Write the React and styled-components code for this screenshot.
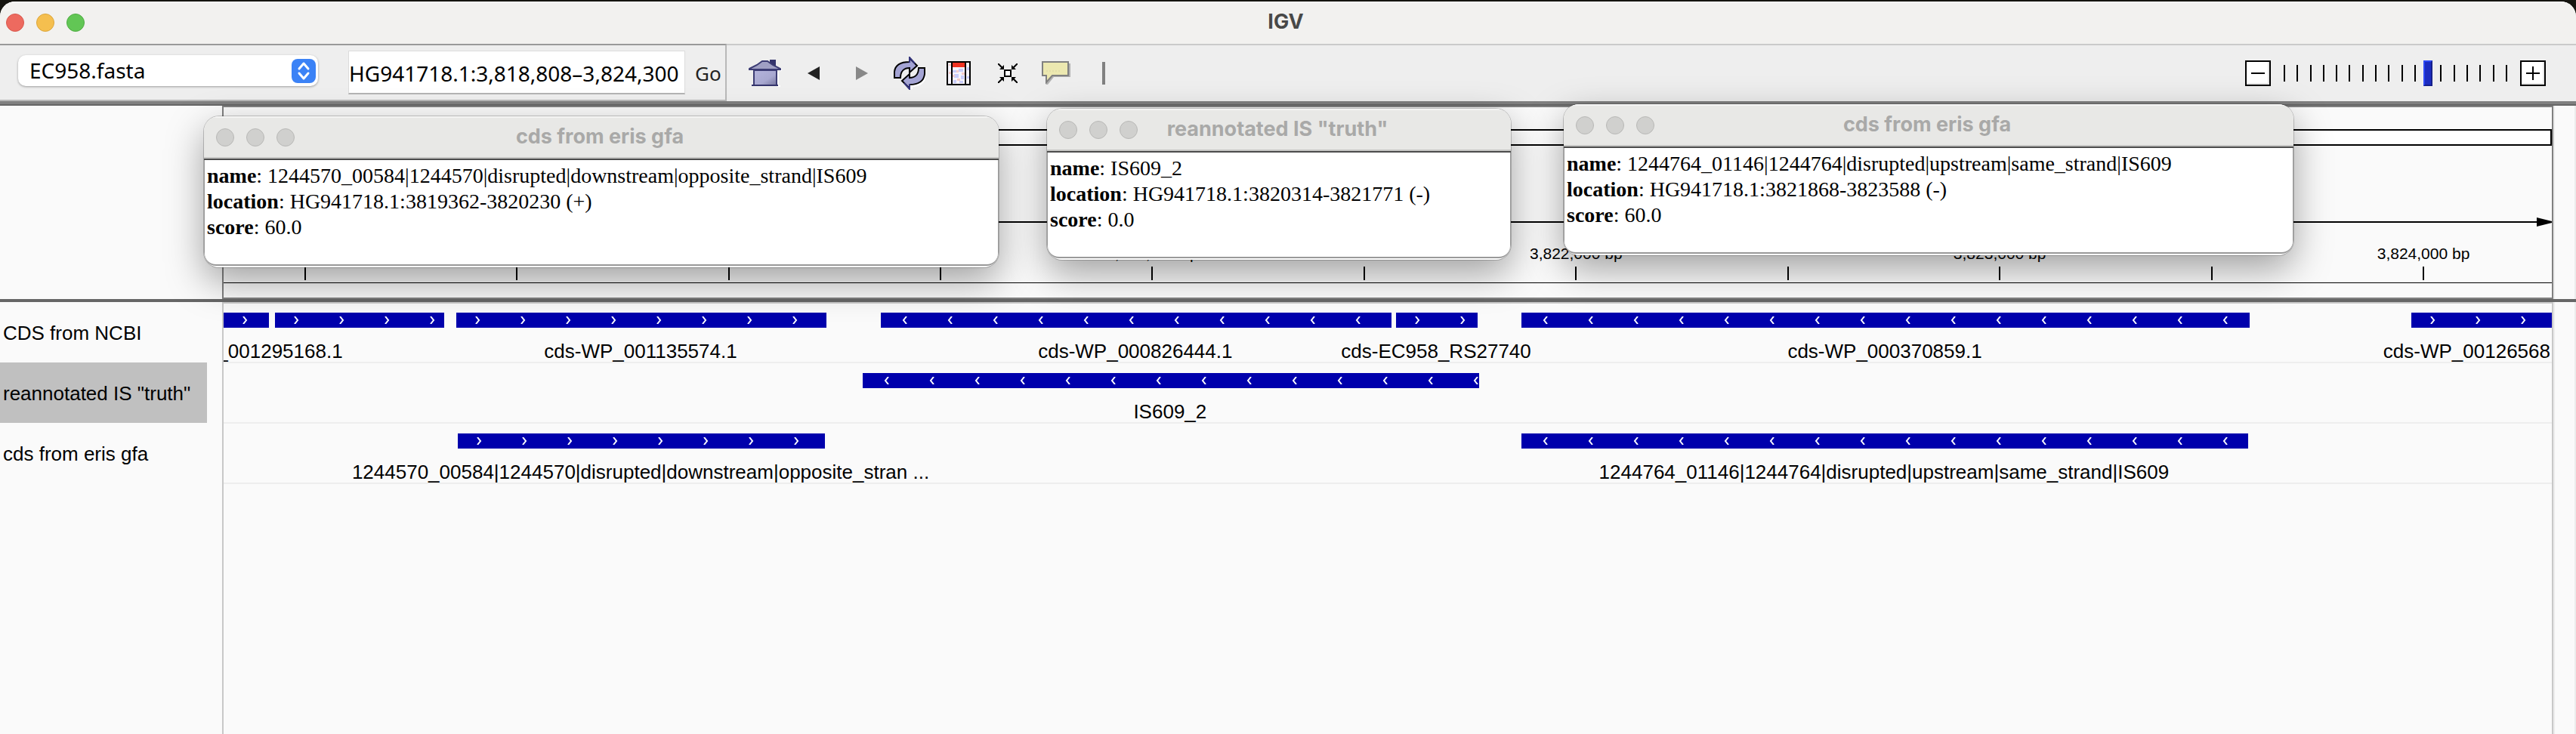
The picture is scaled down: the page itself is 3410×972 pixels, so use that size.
import React from "react";
import styled, { createGlobalStyle } from "styled-components";

const sans = '"Liberation Sans", Arial, sans-serif';
const humanist = '"Noto Sans", "Open Sans", sans-serif';
const heading = 'Inter, "Liberation Sans", sans-serif';
const serif = '"Liberation Serif", "Times New Roman", serif';

const GlobalStyle = createGlobalStyle`
  *, *::before, *::after { box-sizing: border-box; }
  body { margin: 0; background: #15140f; }
`;

const Desktop = styled.div`
  min-height: 100vh;
  padding-top: 2px;
  display: flex;
  flex-direction: column;
  background: #15140f;
  font-family: ${sans};
  color: #000;
`;

const AppWindow = styled.div`
  position: relative;
  flex: 1;
  display: flex;
  flex-direction: column;
  border-radius: 20px 20px 0 0;
  background: #fafafa;
  overflow: hidden;
`;

const TitleBar = styled.header`
  position: relative;
  display: flex;
  align-items: center;
  height: 56px;
  padding-left: 8px;
  background: #f2f1ef;
  box-shadow: inset 0 2px 0 #fbfbfa;
`;

const Lights = styled.div`
  display: flex;
  gap: 16px;
`;

const Light = styled.button`
  width: 24px;
  height: 24px;
  padding: 0;
  border: 1px solid ${(p) => p.$edge};
  border-radius: 50%;
  background: ${(p) => p.$fill};
`;

const Title = styled.h1`
  position: absolute;
  inset: 0;
  margin: 0;
  padding-right: 6px;
  font: 700 27px/54px ${heading};
  text-align: center;
  color: #484847;
  pointer-events: none;
`;

const Toolbar = styled.div`
  display: flex;
  height: 76px;
  background: #eeeeee;
`;

const LocusGroup = styled.form`
  display: flex;
  align-items: center;
  width: 962px;
  padding-left: 24px;
  border: solid #b8b8b8;
  border-width: 2px 2px 2px 0;
  border-top-color: #999999;
`;

const SelectBox = styled.div`
  position: relative;
  width: 397px;
  height: 41px;
  margin: 0 40px 6px 0;
`;

const GenomeSelect = styled.select`
  appearance: none;
  width: 100%;
  height: 100%;
  padding: 0 40px 0 15px;
  border: 0;
  border-radius: 10px;
  background: #fff;
  box-shadow: 0 1px 3px rgba(0, 0, 0, 0.35);
  font: 28px/40px ${humanist};
  color: #000;
`;

const SelectArrows = styled.svg`
  position: absolute;
  top: 5px;
  right: 3px;
  pointer-events: none;
`;

const LocusInput = styled.input`
  width: 446px;
  height: 58px;
  padding: 2px 0 0;
  border: 1px solid #dcdcdc;
  border-bottom: 2px solid #b4b4b4;
  background: #fff;
  font: 28px/50px ${humanist};
  color: #000;
`;

const GoButton = styled.button`
  margin-left: 13px;
  padding: 2px 0 0;
  border: 0;
  background: none;
  font: 26px/50px ${humanist};
  color: #222;
`;

const Tools = styled.div`
  flex: 1;
  display: flex;
  align-items: center;
  padding: 0 40px 0 29px;
  border-top: 2px solid #cacaca;
`;

const ToolButton = styled.button`
  display: flex;
  padding: 0;
  margin-right: ${(p) => p.$gap}px;
  border: 0;
  background: none;
`;

const Separator = styled.div`
  width: 4px;
  height: 30px;
  background: #808080;
`;

const Zoom = styled.div`
  display: flex;
  align-items: center;
  margin-left: auto;
`;

const ZoomButton = styled.button`
  display: flex;
  align-items: center;
  justify-content: center;
  width: 34px;
  height: 34px;
  padding: 0;
  border: 2px solid #000;
  background: #fff;
  box-shadow: inset -2px -2px 0 #e6e6e6;
`;

const ZoomScale = styled.div`
  position: relative;
  display: flex;
  justify-content: space-between;
  align-items: center;
  width: 296px;
  height: 34px;
  margin: 0 17px;
`;

const ScaleMark = styled.span`
  width: 2px;
  height: 22px;
  background: #000;
`;

const ZoomRange = styled.input`
  position: absolute;
  top: 0;
  left: -5px;
  appearance: none;
  width: calc(100% + 10px);
  height: 34px;
  margin: 0;
  background: transparent;
  &::-webkit-slider-thumb {
    appearance: none;
    width: 12px;
    height: 34px;
    border: 2px solid #16208c;
    border-top-color: #2c48f5;
    border-left-color: #2c48f5;
    background: #1c2cc0;
  }
`;

const Splitter = styled.div`
  height: ${(p) => (p.$main ? 6 : 4)}px;
  background: #666;
  border-top: ${(p) => (p.$main ? "4px solid #808080" : "0")};
`;

const PanelRow = styled.section`
  display: grid;
  grid-template-columns: 294px 1fr 30px;
  ${(p) => p.$fill && "flex: 1;"}
`;

const NameColumn = styled.div`
  background: #fafafa;
`;

const ScrollColumn = styled.div`
  background: #fafafa;
  border: solid #ececec;
  border-width: 0 2px;
`;

const Ruler = styled.div`
  position: relative;
  display: flex;
  flex-direction: column;
  height: 256px;
  padding-top: 29px;
  border: 2px solid #808080;
  background: #fafafa;
  overflow: hidden;
`;

const Ideogram = styled.div`
  height: 22px;
  border: 2px solid #000;
  background: #fff;
`;

const SpanArrow = styled.div`
  display: flex;
  align-items: center;
  height: 12px;
  margin: 95px 0 53px;
`;

const SpanLine = styled.div`
  flex: 1;
  height: 2px;
  background: #000;
`;

const RulerScale = styled.div`
  position: relative;
  height: 22px;
  border-bottom: 1px solid #000;
`;

const Tick = styled.div`
  position: absolute;
  top: 0;
  width: 2px;
  height: 18px;
  margin-left: -1px;
  background: #000;
`;

const TickLabel = styled.span`
  position: absolute;
  bottom: 22px;
  left: 1px;
  transform: translateX(-50%);
  font-size: 21px;
  line-height: 26px;
  white-space: nowrap;
`;

const TrackName = styled.div`
  width: 274px;
  height: 80px;
  padding-left: 4px;
  font-size: 26px;
  line-height: 82px;
  white-space: nowrap;
  background: ${(p) => (p.$selected ? "#c0c0c0" : "transparent")};
`;

const DataPanel = styled.div`
  border: solid #c8c8c8;
  border-width: 2px 2px 0;
  background: #fafafa;
  overflow: hidden;
`;

const TrackRow = styled.div`
  position: relative;
  height: 80px;
  border-bottom: 2px solid #eeeeee;
  &:first-child { margin-top: -1px; }
`;

const Feature = styled.div`
  position: absolute;
  top: 13px;
  display: flex;
  flex-direction: column;
  align-items: ${(p) => (p.$labelEnd ? "flex-end" : "center")};
`;

const FeatureBar = styled.div`
  display: flex;
  align-items: center;
  width: 100%;
  height: 20px;
  background: #0000ac;
`;

const FeatureLabel = styled.span`
  margin: 17px 2px 0 0;
  font-size: 26px;
  line-height: 28px;
  white-space: nowrap;
`;

const Dialog = styled.section`
  position: absolute;
  display: flex;
  flex-direction: column;
  height: 200px;
  border-radius: 20px;
  background: #fff;
  box-shadow: 0 0 0 1px rgba(0, 0, 0, 0.2), 0 18px 50px rgba(0, 0, 0, 0.36);
  overflow: hidden;
`;

const DialogBar = styled.div`
  position: relative;
  display: flex;
  align-items: center;
  height: 58px;
  padding-left: 16px;
  background: #e8e8e6;
  border-bottom: 2px solid #4c4c4c;
  box-shadow: inset 0 -2px 0 #c6c6c4, inset 0 2px 0 #f4f4f3;
`;

const DialogTitle = styled.h2`
  position: absolute;
  inset: 0;
  margin: 0;
  padding-right: 4px;
  font: 700 27px/54px ${heading};
  text-align: center;
  color: #a9a9a8;
  pointer-events: none;
`;

const DialogBody = styled.dl`
  flex: 1;
  margin: 0 0 2px;
  padding: 4px 0 0 3px;
  border: solid #999;
  border-width: 0 1px 2px;
  border-radius: 0 0 16px 16px;
  font: 28px/34px ${serif};
`;

const Field = styled.div`
  display: flex;
  white-space: pre;
`;

const FieldName = styled.dt`
  font-weight: 700;
`;

const FieldValue = styled.dd`
  margin: 0;
`;

/* The visible window of the chromosome; everything on the tracks is placed by base pair. */
const VIEW = { start: 3818808, end: 3824303 };
const toPercent = (bp) => ((bp - VIEW.start) / (VIEW.end - VIEW.start)) * 100;

const TICKS = Array.from({ length: 11 }, (_, i) => 3819000 + i * 500);

const TRACKS = [
  {
    name: "CDS from NCBI",
    features: [
      { start: 3818808, end: 3818915, strand: "+", label: "cds-WP_001295168.1" },
      { start: 3818929, end: 3819329, strand: "+" },
      { start: 3819357, end: 3820231, strand: "+", label: "cds-WP_001135574.1" },
      { start: 3820359, end: 3821564, strand: "-", label: "cds-WP_000826444.1" },
      { start: 3821575, end: 3821768, strand: "+", label: "cds-EC958_RS27740" },
      { start: 3821871, end: 3823590, strand: "-", label: "cds-WP_000370859.1" },
      { start: 3823971, end: 3824303, strand: "+", label: "cds-WP_00126568", labelEnd: true },
    ],
  },
  {
    name: 'reannotated IS "truth"',
    selected: true,
    features: [{ start: 3820316, end: 3821771, strand: "-", label: "IS609_2" }],
  },
  {
    name: "cds from eris gfa",
    features: [
      {
        start: 3819361,
        end: 3820227,
        strand: "+",
        label: "1244570_00584|1244570|disrupted|downstream|opposite_stran ...",
      },
      {
        start: 3821871,
        end: 3823586,
        strand: "-",
        label: "1244764_01146|1244764|disrupted|upstream|same_strand|IS609",
      },
    ],
  },
];

const DIALOGS = [
  {
    title: "cds from eris gfa",
    box: { left: 270, top: 152, width: 1052 },
    fields: [
      ["name", "1244570_00584|1244570|disrupted|downstream|opposite_strand|IS609"],
      ["location", "HG941718.1:3819362-3820230 (+)"],
      ["score", "60.0"],
    ],
  },
  {
    title: 'reannotated IS "truth"',
    box: { left: 1386, top: 142, width: 614 },
    fields: [
      ["name", "IS609_2"],
      ["location", "HG941718.1:3820314-3821771 (-)"],
      ["score", "0.0"],
    ],
  },
  {
    title: "cds from eris gfa",
    box: { left: 2070, top: 136, width: 966 },
    fields: [
      ["name", "1244764_01146|1244764|disrupted|upstream|same_strand|IS609"],
      ["location", "HG941718.1:3821868-3823588 (-)"],
      ["score", "60.0"],
    ],
  },
];

function Strand({ strand, id }) {
  const d = strand === "+" ? "M26 0 L30 5 L26 10" : "M34 0 L30 5 L34 10";
  return (
    <svg width="100%" height="10" aria-hidden="true">
      <defs>
        <pattern id={id} width="60" height="10" patternUnits="userSpaceOnUse">
          <path d={d} fill="none" stroke="#fff" strokeWidth="2" />
        </pattern>
      </defs>
      <rect width="100%" height="10" fill={`url(#${id})`} />
    </svg>
  );
}

function HomeIcon() {
  return (
    <svg width="44" height="36" viewBox="0 0 44 36">
      <defs>
        <linearGradient id="wall" x1="0" y1="0" x2="1" y2="1">
          <stop offset="0" stopColor="#b4b4dc" />
          <stop offset="0.6" stopColor="#a8a8d0" />
          <stop offset="1" stopColor="#74749c" />
        </linearGradient>
      </defs>
      <path d="M43 15v-4M39 36V16M38 35h4" stroke="#fff" strokeWidth="2" />
      <path d="M28 0h8v9h-8z" fill="#34346c" />
      <path d="M1 12 L11 7 L18 2 H25 L32 7 L42 12 V13 H1z" fill="#a0a0c4" stroke="#3c3c74" strokeWidth="2" />
      <path d="M7 14h30v20H7z" fill="url(#wall)" stroke="#3c3c74" strokeWidth="2" />
      <path d="M4 34h35" stroke="#34346c" strokeWidth="2" />
    </svg>
  );
}

function RefreshIcon() {
  return (
    <svg width="42" height="44" viewBox="0 0 42 44">
      <g fill="none" stroke="#fff" strokeWidth="4">
        <path d="M41 17 V25 C40 34 33 38 23 38 V43" />
      </g>
      <g fill="#a4a4d4" strokeWidth="2" strokeLinejoin="miter">
        <path d="M1 28 V20 C2 11 9 7 21 7 V2 L31 12 L21 21 V15 C14 15 9 19 9 28 Z" stroke="#000" />
        <path d="M41 15 V23 C40 32 33 37 21 37 V42 L11 32 L21 23 V28 C28 28 33 24 33 15 Z" stroke="#000" />
        <path d="M21 8 V1 L28 9 M21 36 V43 L14 35" fill="none" stroke="#34347c" />
      </g>
    </svg>
  );
}

function RegionIcon() {
  return (
    <svg width="32" height="32" viewBox="0 0 32 32">
      <path d="M1 1h30v30H1z" fill="#f6f4fc" stroke="#000" strokeWidth="2" />
      <path d="M8 12h5v3H8zM16 10h6v4h-6zM10 17h6v5h-6zM19 19h4v5h-4zM9 25h4v4H9zM17 26h5v3h-5zM27 8h3v4h-3zM27 20h3v3h-3z" fill="#c8ccfa" />
      <path d="M13 12h3v3h-3zM8 18h3v3H8zM3 14h3v3H3zM20 15h4v3h-4zM14 23h4v3h-4zM3 4h3v2H3z" fill="#f6ccc8" />
      <path d="M7 2h18v6H7z" fill="#ee3322" />
      <path d="M7 1v30M25 1v30" stroke="#000" strokeWidth="2" />
    </svg>
  );
}

function FitIcon() {
  return (
    <svg width="26" height="26" viewBox="0 0 26 26">
      <path d="M9 9h8v8H9z" fill="#fff" stroke="#000" strokeWidth="2" />
      <path d="M0 0l7 7M26 0l-7 7M0 26l7-7M26 26l-7-7" stroke="#000" strokeWidth="2" />
      <path d="M8 8V2L2 8zM18 8V2l6 6zM8 18v6l-6-6zM18 18v6l6-6z" />
    </svg>
  );
}

function NoteIcon() {
  return (
    <svg width="38" height="32" viewBox="0 0 38 32">
      <path d="M4 3h34v18H16l-8 10H6z" fill="#b0b0b0" />
      <path d="M1 1h34v18H14l-8 9v-9H1z" fill="#ece8b0" stroke="#808080" strokeWidth="2" />
      <path d="M6 13h20" stroke="#d8d4a4" strokeWidth="1" strokeDasharray="2 2" />
    </svg>
  );
}

export default function App() {
  return (
    <Desktop>
      <GlobalStyle />
      <AppWindow>
        <TitleBar>
          <Lights>
            <Light aria-label="Close" $fill="#ed6a5f" $edge="#d8584d" />
            <Light aria-label="Minimize" $fill="#f5bf4f" $edge="#dba53a" />
            <Light aria-label="Zoom window" $fill="#62c655" $edge="#4fac42" />
          </Lights>
          <Title>IGV</Title>
        </TitleBar>

        <Toolbar>
          <LocusGroup onSubmit={(e) => e.preventDefault()}>
            <SelectBox>
              <GenomeSelect aria-label="Genome">
                <option>EC958.fasta</option>
              </GenomeSelect>
              <SelectArrows width="32" height="32" viewBox="0 0 32 32" aria-hidden="true">
                <rect width="32" height="32" rx="8" fill="#3b82f6" />
                <path d="M10 13 L16 6 L22 13 M10 19 L16 26 L22 19" fill="none" stroke="#fff" strokeWidth="3" strokeLinecap="round" strokeLinejoin="round" />
              </SelectArrows>
            </SelectBox>
            <LocusInput aria-label="Locus" defaultValue="HG941718.1:3,818,808–3,824,300" />
            <GoButton>Go</GoButton>
          </LocusGroup>
          <Tools>
            <ToolButton aria-label="Home" $gap={34}><HomeIcon /></ToolButton>
            <ToolButton aria-label="Back" $gap={48}>
              <svg width="16" height="20" viewBox="0 0 16 20"><path d="M0 10L16 1v18z" fill="#222" /></svg>
            </ToolButton>
            <ToolButton aria-label="Forward" $gap={34}>
              <svg width="16" height="20" viewBox="0 0 16 20"><path d="M16 10L0 1v18z" fill="#888" /></svg>
            </ToolButton>
            <ToolButton aria-label="Refresh" $gap={28}><RefreshIcon /></ToolButton>
            <ToolButton aria-label="Region of interest" $gap={36}><RegionIcon /></ToolButton>
            <ToolButton aria-label="Fit to window" $gap={32}><FitIcon /></ToolButton>
            <ToolButton aria-label="Popup text" $gap={42}><NoteIcon /></ToolButton>
            <Separator />
            <Zoom>
              <ZoomButton aria-label="Zoom out">
                <svg width="18" height="18"><path d="M0 9h18" stroke="#000" strokeWidth="2" /></svg>
              </ZoomButton>
              <ZoomScale>
                {Array.from({ length: 18 }, (_, i) => (
                  <ScaleMark key={i} />
                ))}
                <ZoomRange type="range" aria-label="Zoom level" min="0" max="17" defaultValue="11" />
              </ZoomScale>
              <ZoomButton aria-label="Zoom in">
                <svg width="18" height="18"><path d="M0 9h18M9 0v18" stroke="#000" strokeWidth="2" /></svg>
              </ZoomButton>
            </Zoom>
          </Tools>
        </Toolbar>
        <Splitter $main />

        <PanelRow>
          <NameColumn />
          <Ruler>
            <Ideogram />
            <SpanArrow>
              <SpanLine />
              <svg width="20" height="12"><path d="M0 0L20 5v2L0 12z" /></svg>
            </SpanArrow>
            <RulerScale>
              {TICKS.map((bp) => (
                <Tick key={bp} style={{ left: `${toPercent(bp)}%` }}>
                  {bp % 1000 === 0 && <TickLabel>{bp.toLocaleString("en-US")} bp</TickLabel>}
                </Tick>
              ))}
            </RulerScale>
          </Ruler>
          <ScrollColumn />
        </PanelRow>
        <Splitter />

        <PanelRow $fill>
          <NameColumn>
            {TRACKS.map((t) => (
              <TrackName key={t.name} $selected={t.selected}>{t.name}</TrackName>
            ))}
          </NameColumn>
          <DataPanel>
            {TRACKS.map((t, row) => (
              <TrackRow key={t.name}>
                {t.features.map((f, i) => (
                  <Feature
                    key={f.start}
                    $labelEnd={f.labelEnd}
                    style={{ left: `${toPercent(f.start)}%`, width: `${toPercent(f.end) - toPercent(f.start)}%` }}
                  >
                    <FeatureBar><Strand strand={f.strand} id={`strand-${row}-${i}`} /></FeatureBar>
                    {f.label && <FeatureLabel>{f.label}</FeatureLabel>}
                  </Feature>
                ))}
              </TrackRow>
            ))}
          </DataPanel>
          <ScrollColumn />
        </PanelRow>

        {DIALOGS.map((d, i) => (
          <Dialog key={i} style={d.box} aria-label={d.title}>
            <DialogBar>
              <Lights>
                <Light aria-label="Close" $fill="#d0d0ce" $edge="#b8b8b6" />
                <Light aria-label="Minimize" $fill="#d0d0ce" $edge="#b8b8b6" />
                <Light aria-label="Zoom window" $fill="#d0d0ce" $edge="#b8b8b6" />
              </Lights>
              <DialogTitle>{d.title}</DialogTitle>
            </DialogBar>
            <DialogBody>
              {d.fields.map(([name, value]) => (
                <Field key={name}>
                  <FieldName>{name}</FieldName>
                  <FieldValue>{": " + value}</FieldValue>
                </Field>
              ))}
            </DialogBody>
          </Dialog>
        ))}
      </AppWindow>
    </Desktop>
  );
}
